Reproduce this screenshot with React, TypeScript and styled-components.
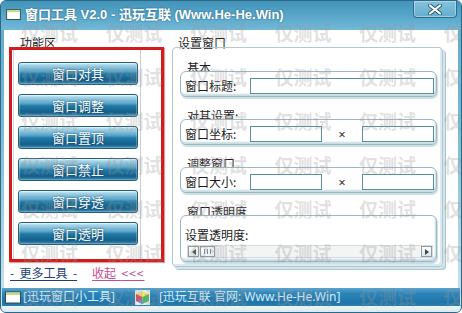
import React from "react";
import styled, { createGlobalStyle } from "styled-components";

const CJK = `"Noto Sans CJK SC", "Noto Sans", sans-serif`;
const LATIN = `"Noto Sans", "Noto Sans CJK SC", sans-serif`;
const ARIAL = `"Liberation Sans", "Noto Sans CJK SC", sans-serif`;

const GlobalStyle = createGlobalStyle`
  html, body { margin: 0; padding: 0; background: #ffffff; }
  body { font-family: ${CJK}; }
  * { box-sizing: border-box; }
`;

const Window = styled.div`
  position: relative;
  width: 462px;
  height: 313px;
  border: 1px solid #2d6985;
  border-radius: 6px;
  overflow: hidden;
  background: linear-gradient(#5fa9ca, #78b9d5 40%, #cfe6ef);
  display: flex;
  flex-direction: column;
  font-family: ${CJK};
  color: #1b1b1b;
`;

const TitleBar = styled.div`
  height: 29px;
  flex: none;
  display: flex;
  align-items: flex-start;
  padding-left: 5px;
  background: linear-gradient(#4394bb, #5aa8cb 55%, #74b8d6);
`;

const TitleIcon = styled.svg`
  margin-top: 8px;
  flex: none;
`;

const TitleText = styled.span`
  margin: 5px 0 0 4px;
  font-family: ${ARIAL};
  font-size: 13px;
  font-weight: bold;
  line-height: 17px;
  color: #ffffff;
  text-shadow: 0 0 2px rgba(20, 60, 90, 0.7);
  white-space: nowrap;
`;

const CloseButton = styled.div`
  margin-left: auto;
  margin-right: 4px;
  width: 44px;
  height: 17px;
  flex: none;
  border: 1px solid #2f6d8b;
  border-top: none;
  border-radius: 0 0 4px 4px;
  background: linear-gradient(#86c2dc, #62aecf);
  box-shadow: inset 0 0 0 1px rgba(255, 255, 255, 0.35);
  display: flex;
  align-items: center;
  justify-content: center;
`;

const Body = styled.div`
  flex: none;
  height: 258px;
  margin: 0 3px;
  background: #ffffff;
  display: flex;
`;

const LeftCol = styled.div`
  width: 168px;
  flex: none;
  padding: 6px 0 0 5px;
  display: flex;
  flex-direction: column;
`;

const SectionLabel = styled.div<{ $indent: number }>`
  font-size: 12px;
  line-height: 14px;
  height: 14px;
  margin-left: ${(p) => p.$indent}px;
  white-space: nowrap;
  color: #1b1b1b;
`;

const RedFrame = styled.div`
  margin-top: -3px;
  width: 155px;
  height: 215px;
  border: 3px solid #d21c1c;
  box-shadow: 1px 1px 1px rgba(120, 0, 0, 0.35);
  display: flex;
`;

const ToolPanel = styled.div`
  margin-left: 1px;
  width: 128px;
  height: 100%;
  border-left: 1px solid #cdd7db;
  border-right: 1px solid #c3cfd4;
  padding: 12px 0 0 4px;
  display: flex;
  flex-direction: column;
  gap: 9px;
`;

const ToolButton = styled.button`
  width: 120px;
  height: 23px;
  flex: none;
  padding: 0;
  border: 1px solid #235f7c;
  border-radius: 3px;
  background: linear-gradient(
    #e0f2f8 0%,
    #a6d4e6 10%,
    #58a4c8 40%,
    #2279a5 52%,
    #135f8b 82%,
    #3f8cb3 100%
  );
  box-shadow: inset 0 0 0 1px rgba(255, 255, 255, 0.25);
  color: #ffffff;
  font-family: ${CJK};
  font-size: 13px;
  line-height: 21px;
  text-shadow: 0 0 2px rgba(0, 40, 70, 0.8);
  cursor: default;
`;

const LinksRow = styled.div`
  margin-top: 3px;
  padding-left: 1px;
  display: flex;
  gap: 15px;
  font-size: 12px;
  line-height: 15px;
`;

const LinkText = styled.span<{ $color: string }>`
  color: ${(p) => p.$color};
  text-decoration: underline;
  text-underline-offset: 2px;
  white-space: pre;
`;

const Arrows = styled.span`
  letter-spacing: 1px;
`;

const RightCol = styled.div`
  flex: 1;
  padding-top: 6px;
  display: flex;
  flex-direction: column;
`;

const OuterGroup = styled.div`
  margin-top: -3px;
  width: 271px;
  height: 220px;
  border: 1px solid #b4c6ce;
  border-radius: 4px;
  box-shadow: inset -2px -2px 0 #dceaf0, 2px 2px 0 #d2e5ec, 3px 3px 0 #a9c7d3;
  padding: 13px 5px 0 7px;
  display: flex;
  flex-direction: column;
`;

const GroupSection = styled.div`
  display: flex;
  flex-direction: column;
  & + & {
    margin-top: 12px;
  }
`;

const GroupBox = styled.div<{ $height: number }>`
  position: relative;
  margin-top: -4px;
  height: ${(p) => p.$height}px;
  border: 1px solid #9db8c3;
  border-radius: 6px;
  box-shadow: inset -1px -2px 2px rgba(90, 150, 175, 0.35),
    1px 2px 1px rgba(120, 170, 190, 0.4);
  background: #ffffff;
`;

const FieldRow = styled.div`
  display: flex;
  align-items: center;
  height: 100%;
  padding: 3px 2px 0 4px;
`;

const FieldLabel = styled.span`
  width: 65px;
  flex: none;
  font-size: 12px;
  line-height: 16px;
  white-space: nowrap;
`;

const TextInput = styled.div<{ $wide?: boolean }>`
  height: 16px;
  flex: ${(p) => (p.$wide ? "1" : "none")};
  width: ${(p) => (p.$wide ? "auto" : "72px")};
  border: 1px solid #5d8e9e;
  background: #ffffff;
`;

const Times = styled.span`
  width: 40px;
  flex: none;
  text-align: center;
  font-family: ${LATIN};
  font-size: 13px;
  color: #333;
`;

const OpacityBody = styled.div`
  display: flex;
  flex-direction: column;
  height: 100%;
  padding: 11px 3px 0 6px;
`;

const OpacityLabel = styled.span`
  margin-left: -2px;
  font-size: 12px;
  line-height: 16px;
`;

const ScrollBar = styled.div`
  margin-top: 2px;
  height: 13px;
  display: flex;
  background: #f3f4f4;
  border: 1px solid #d6dcde;
`;

const ScrollArrow = styled.div<{ $end?: boolean }>`
  width: 11px;
  height: 100%;
  flex: none;
  margin-left: ${(p) => (p.$end ? "auto" : "0")};
  border: 1px solid #8f9ea4;
  background: linear-gradient(#ffffff, #dfe5e8);
  display: flex;
  align-items: center;
  justify-content: center;
`;

const ScrollThumb = styled.div`
  width: 15px;
  height: 100%;
  flex: none;
  margin-left: 1px;
  border: 1px solid #8f9ea4;
  background: linear-gradient(90deg, #ffffff, #e6ecef);
  display: flex;
  align-items: center;
  justify-content: center;
  gap: 2px;
  & > i {
    display: block;
    width: 1px;
    height: 5px;
    background: #7d8c93;
  }
`;

const StatusBar = styled.div`
  flex: none;
  height: 18px;
  margin: 0 1px;
  padding-left: 3px;
  display: flex;
  align-items: center;
  background: linear-gradient(#5aa4cf, #2c85b9 30%, #1f74a8 80%, #2a7fb1);
  font-size: 12px;
  line-height: 16px;
  color: #d6ecfa;
  white-space: nowrap;
`;

const StatusItem = styled.div<{ $gap: number; $offset: number }>`
  display: flex;
  align-items: center;
  gap: ${(p) => p.$gap}px;
  margin-left: ${(p) => p.$offset}px;
`;

const StatusText = styled.span`
  font-family: ${LATIN};
`;

const BottomStrip = styled.div`
  flex: 1;
  margin: 0 1px;
  background: linear-gradient(#eef6f9, #d7e9f0);
`;

const Watermark = styled.div`
  position: absolute;
  inset: 0;
  pointer-events: none;
  display: grid;
  grid-template-columns: repeat(6, 84.5px);
  grid-auto-rows: 44px;
  padding: 9px 0 0 20px;
  align-items: center;
  font-family: ${CJK};
  font-size: 19px;
  font-weight: bold;
  color: rgba(150, 150, 150, 0.3);
  white-space: nowrap;
  overflow: hidden;
`;

const WindowIcon = ({ w, h }: { w: number; h: number }) => (
  <svg width={w} height={h} viewBox="0 0 16 12">
    <rect x="0.5" y="0.5" width="15" height="11" fill="#ffffff" stroke="#2b4d58" />
    <rect x="1" y="1" width="14" height="2.5" fill="#c9d98a" />
  </svg>
);

const CubeIcon = () => (
  <svg width="15" height="15" viewBox="0 0 15 15">
    <rect x="0" y="0" width="15" height="15" fill="#e9eef2" />
    <polygon points="7.5,1 14,4 7.5,7 1,4" fill="#f3e46a" />
    <polygon points="1,4 7.5,7 7.5,14 1,11" fill="#e0445a" />
    <polygon points="14,4 7.5,7 7.5,14 14,11" fill="#4fb861" />
    <polygon points="4,9 7.5,10.5 7.5,14 4,12.5" fill="#5a8fe0" />
  </svg>
);

const buttons = ["窗口对其", "窗口调整", "窗口置顶", "窗口禁止", "窗口穿透", "窗口透明"];

export default function App() {
  const marks = Array.from({ length: 42 }, (_, i) => i);
  return (
    <>
      <GlobalStyle />
      <Window>
        <TitleBar>
          <TitleIcon width="15" height="11" viewBox="0 0 16 12">
            <rect x="0.5" y="0.5" width="15" height="11" fill="#ffffff" stroke="#2b4d58" />
            <rect x="1" y="1" width="14" height="2.5" fill="#c9d98a" />
          </TitleIcon>
          <TitleText>窗口工具 V2.0 - 迅玩互联 (Www.He-He.Win)</TitleText>
          <CloseButton>
            <svg width="14" height="11" viewBox="0 0 14 11">
              <path
                d="M2 1.5 L12 9.5 M12 1.5 L2 9.5"
                stroke="#2d5b70"
                strokeWidth="4"
                strokeLinecap="round"
              />
              <path
                d="M2 1.5 L12 9.5 M12 1.5 L2 9.5"
                stroke="#ffffff"
                strokeWidth="2.2"
                strokeLinecap="round"
              />
            </svg>
          </CloseButton>
        </TitleBar>

        <Body>
          <LeftCol>
            <SectionLabel $indent={11}>功能区</SectionLabel>
            <RedFrame>
              <ToolPanel>
                {buttons.map((b) => (
                  <ToolButton key={b}>{b}</ToolButton>
                ))}
              </ToolPanel>
            </RedFrame>
            <LinksRow>
              <LinkText $color="#1d3e7a">{"-  更多工具  -"}</LinkText>
              <LinkText $color="#c24f8d">
                {"收起  "}
                <Arrows>{"<<<"}</Arrows>
              </LinkText>
            </LinksRow>
          </LeftCol>

          <RightCol>
            <SectionLabel $indent={6}>设置窗口</SectionLabel>
            <OuterGroup>
              <GroupSection>
                <SectionLabel $indent={7}>基本</SectionLabel>
                <GroupBox $height={26}>
                  <FieldRow>
                    <FieldLabel>窗口标题:</FieldLabel>
                    <TextInput $wide />
                  </FieldRow>
                </GroupBox>
              </GroupSection>
              <GroupSection>
                <SectionLabel $indent={7}>对其设置:</SectionLabel>
                <GroupBox $height={26}>
                  <FieldRow>
                    <FieldLabel>窗口坐标:</FieldLabel>
                    <TextInput />
                    <Times>×</Times>
                    <TextInput />
                  </FieldRow>
                </GroupBox>
              </GroupSection>
              <GroupSection>
                <SectionLabel $indent={7}>调整窗口</SectionLabel>
                <GroupBox $height={26}>
                  <FieldRow>
                    <FieldLabel>窗口大小:</FieldLabel>
                    <TextInput />
                    <Times>×</Times>
                    <TextInput />
                  </FieldRow>
                </GroupBox>
              </GroupSection>
              <GroupSection>
                <SectionLabel $indent={7}>窗口透明度</SectionLabel>
                <GroupBox $height={47}>
                  <OpacityBody>
                    <OpacityLabel>设置透明度:</OpacityLabel>
                    <ScrollBar>
                      <ScrollArrow>
                        <svg width="4" height="6" viewBox="0 0 4 6">
                          <polygon points="4,0 0,3 4,6" fill="#3a4a50" />
                        </svg>
                      </ScrollArrow>
                      <ScrollThumb>
                        <i />
                        <i />
                        <i />
                      </ScrollThumb>
                      <ScrollArrow $end>
                        <svg width="4" height="6" viewBox="0 0 4 6">
                          <polygon points="0,0 4,3 0,6" fill="#3a4a50" />
                        </svg>
                      </ScrollArrow>
                    </ScrollBar>
                  </OpacityBody>
                </GroupBox>
              </GroupSection>
            </OuterGroup>
          </RightCol>
        </Body>

        <StatusBar>
          <StatusItem $gap={2} $offset={0}>
            <WindowIcon w={16} h={13} />
            <StatusText>[迅玩窗口小工具]</StatusText>
          </StatusItem>
          <StatusItem $gap={9} $offset={20}>
            <CubeIcon />
            <StatusText>[迅玩互联 官网: Www.He-He.Win]</StatusText>
          </StatusItem>
        </StatusBar>
        <BottomStrip />

        <Watermark aria-hidden="true">
          {marks.map((i) => (
            <span key={i}>仅测试</span>
          ))}
        </Watermark>
      </Window>
    </>
  );
}
